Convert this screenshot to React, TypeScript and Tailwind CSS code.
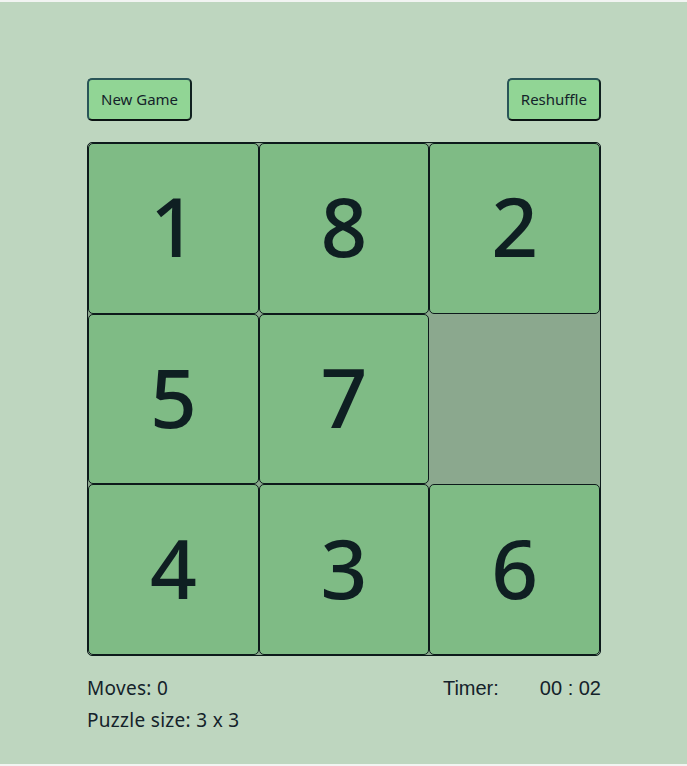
import React from 'react';

const tiles: (number | null)[] = [1, 8, 2, 5, 7, null, 4, 3, 6];

function Tile({ value }: { value: number | null }) {
  if (value === null) {
    return <div className="aspect-square" />;
  }
  return (
    <div className="aspect-square flex items-center justify-center rounded-[5px] border border-[#0d1a1b] bg-[#7fbb85] text-[82px] font-medium leading-none text-[#0f1f22] select-none">
      <span className="-mt-[6px]">{value}</span>
    </div>
  );
}

function Button({ label }: { label: string }) {
  return (
    <button className="h-[43px] px-[12px] rounded-[5px] border-2 border-[#2a5558] border-b-[#0b1313] border-r-[#10201f] bg-[#91d595] text-[15px] text-[#14232a]">
      {label}
    </button>
  );
}

export default function App() {
  return (
    <div className="bg-[#f2f4f2] py-[2px]" style={{ fontFamily: '"Noto Sans", Lato, sans-serif' }}>
      <div className="min-h-[762px] bg-[#bed6bf]">
        <div className="w-[514px] pt-[76px] ml-[87px]">
          <div className="flex justify-between">
            <Button label="New Game" />
            <Button label="Reshuffle" />
          </div>
          <div className="mt-[21px] grid grid-cols-3 rounded-[5px] border border-[#0d1a1b] bg-[#8ba88e] overflow-hidden">
            {tiles.map((t, i) => (
              <Tile key={i} value={t} />
            ))}
          </div>
          <div className="mt-[17px] flex items-baseline justify-between text-[19px] tracking-[0.3px] text-[#14222a]">
            <span>Moves: 0</span>
            <span className="flex gap-[41px] text-[20px] tracking-normal" style={{ fontFamily: '"Liberation Sans", Arial, sans-serif' }}>
              <span>Timer:</span>
              <span>00 : 02</span>
            </span>
          </div>
          <div className="mt-[3px] text-[19px] tracking-[0.3px] text-[#14222a]">Puzzle size: 3 x 3</div>
        </div>
      </div>
    </div>
  );
}
